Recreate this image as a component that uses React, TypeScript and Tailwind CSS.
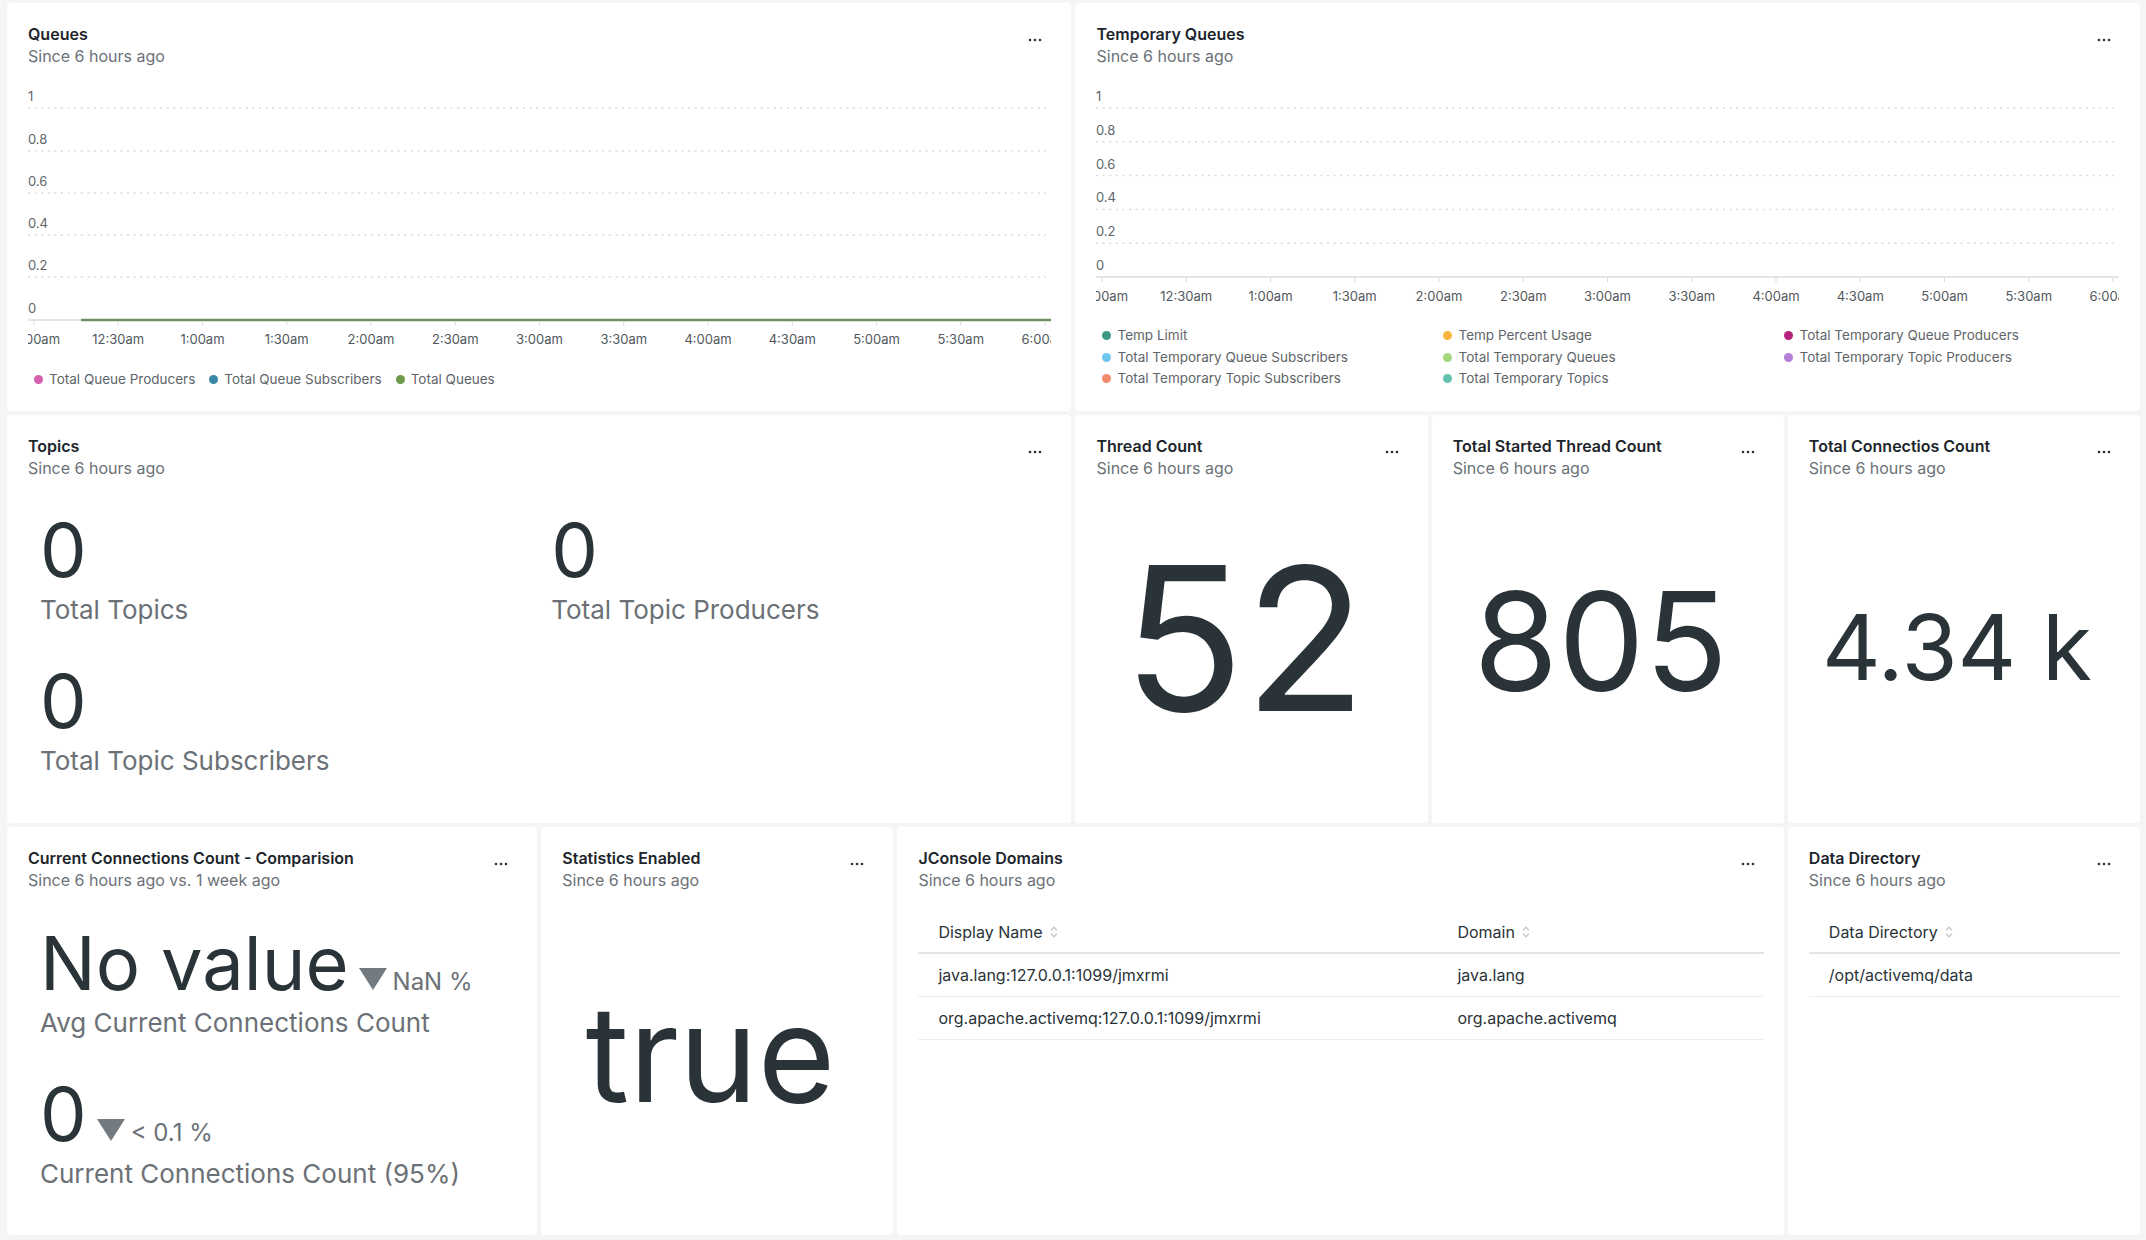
import React from "react";

const ticks = [
  "12:00am",
  "12:30am",
  "1:00am",
  "1:30am",
  "2:00am",
  "2:30am",
  "3:00am",
  "3:30am",
  "4:00am",
  "4:30am",
  "5:00am",
  "5:30am",
  "6:00am",
];

const yValues = ["1", "0.8", "0.6", "0.4", "0.2"];

const queueSeries = [
  { label: "Total Queue Producers", color: "#d65fad" },
  { label: "Total Queue Subscribers", color: "#3b87a6" },
  { label: "Total Queues", color: "#6c9a4a" },
];

const tempSeries = [
  { label: "Temp Limit", color: "#3a9985" },
  { label: "Temp Percent Usage", color: "#f6b73c" },
  { label: "Total Temporary Queue Producers", color: "#b4227e" },
  { label: "Total Temporary Queue Subscribers", color: "#6cc6ee" },
  { label: "Total Temporary Queues", color: "#a7d67c" },
  { label: "Total Temporary Topic Producers", color: "#b57ed8" },
  { label: "Total Temporary Topic Subscribers", color: "#f08b6b" },
  { label: "Total Temporary Topics", color: "#63c1b1" },
];

function MoreIcon() {
  return (
    <svg width="14" height="4" viewBox="0 0 14 4" className="mt-[15px] shrink-0" fill="#293338">
      <circle cx="2" cy="2" r="1.3" />
      <circle cx="7" cy="2" r="1.3" />
      <circle cx="12" cy="2" r="1.3" />
    </svg>
  );
}

function SortIcon() {
  return (
    <svg width="8" height="14" viewBox="0 0 8 14" fill="none" stroke="#c3c8cb" strokeWidth="1.3" className="ml-[7px]">
      <path d="M1.2 5.2 4 2.2l2.8 3" />
      <path d="M1.2 8.8 4 11.8l2.8-3" />
    </svg>
  );
}

function DownTriangle({ className = "" }: { className?: string }) {
  return (
    <svg width="28" height="22" viewBox="0 0 28 22" className={className}>
      <path d="M0 0h28L14 22z" fill="#737b80" />
    </svg>
  );
}

interface CardProps {
  title: string;
  subtitle?: string;
  className?: string;
  children?: React.ReactNode;
}

function Card({ title, subtitle = "Since 6 hours ago", className = "", children }: CardProps) {
  return (
    <section className={`flex min-w-0 flex-col rounded-[4px] bg-white ${className}`}>
      <header className="flex items-start justify-between pl-[21px] pr-[29px] pt-[20px]">
        <div className="min-w-0">
          <h2 className="text-[16px] font-semibold leading-[22px] text-[#1d252c]">{title}</h2>
          <p className="text-[16px] leading-[22px] text-[#6b7176]">{subtitle}</p>
        </div>
        <MoreIcon />
      </header>
      {children}
    </section>
  );
}

interface ChartProps {
  grid: number[];
  axis: number;
  labelY: number;
  height: number;
  lineFrom?: number;
}

// time series panel; labels at both ends are clipped by the plot edge, like the original
function TimeChart({ grid, axis, labelY, height, lineFrom }: ChartProps) {
  const W = 1023;
  const step = 84.25;
  return (
    <svg width={W} height={height} className="block">
      {grid.map((y, i) => (
        <g key={y}>
          <text x={0} y={y - 7} fontSize={13} fill="#60676c">
            {yValues[i]}
          </text>
          <line x1={0} x2={1018} y1={y} y2={y} stroke="#d8dbdd" strokeWidth={1.5} strokeDasharray="2 4.6" />
        </g>
      ))}
      <text x={0} y={axis - 7} fontSize={13} fill="#60676c">
        0
      </text>
      <line x1={0} x2={W} y1={axis} y2={axis} stroke="#e2e4e5" strokeWidth={2} />
      {lineFrom !== undefined && (
        <line x1={lineFrom} x2={W} y1={axis} y2={axis} stroke="#6b9160" strokeWidth={2.5} />
      )}
      {ticks.map((t, i) => {
        const x = 6 + i * step;
        return (
          <g key={t}>
            <line x1={x} x2={x} y1={axis + 1} y2={axis + 5} stroke="#d5d8da" strokeWidth={1} />
            <text x={x} y={labelY} textAnchor="middle" fontSize={13} fill="#51585d">
              {t}
            </text>
          </g>
        );
      })}
    </svg>
  );
}

function LegendItem({ label, color }: { label: string; color: string }) {
  return (
    <span className="flex items-center gap-[6px] whitespace-nowrap">
      <span className="h-[9px] w-[9px] shrink-0 rounded-full" style={{ backgroundColor: color }} />
      {label}
    </span>
  );
}

function Metric({ value, label, delta }: { value: string; label: string; delta?: string }) {
  return (
    <div className="flex flex-col px-[12px] pb-[37px]">
      <div className="flex items-baseline">
        <span className="text-[74px] leading-[76px] text-[#293338]">{value}</span>
        {delta && (
          <>
            <DownTriangle className="mb-[2px] ml-[10px]" />
            <span className="ml-[6px] text-[24px] leading-none text-[#6b7176]">{delta}</span>
          </>
        )}
      </div>
      <div className="mt-[6px] whitespace-nowrap text-[26px] leading-[32px] text-[#6b7176]">{label}</div>
    </div>
  );
}

function BigNumber({ value, size, pb }: { value: string; size: string; pb: string }) {
  return (
    <div className={`flex flex-1 items-center justify-center pl-[14px] pr-[28px] ${pb}`}>
      <span className={`${size} leading-none whitespace-nowrap text-[#293338]`}>{value}</span>
    </div>
  );
}

function DataTable({ columns, rows, firstWidth }: { columns: string[]; rows: string[][]; firstWidth?: string }) {
  return (
    <div className="pl-[21px] pr-[20px] pt-[20px] text-[16px] text-[#293338]">
      <div className="flex h-[43px] items-center border-b-2 border-[#e3e5e6]">
        {columns.map((c, i) => (
          <div key={c} className={`flex items-center pl-[20px] ${i === 0 && firstWidth ? firstWidth : "flex-1"}`}>
            {c}
            <SortIcon />
          </div>
        ))}
      </div>
      {rows.map((r) => (
        <div key={r[0]} className="flex h-[43px] items-center border-b border-[#eceeef]">
          {r.map((cell, i) => (
            <div key={cell} className={`pl-[20px] whitespace-nowrap ${i === 0 && firstWidth ? firstWidth : "flex-1"}`}>
              {cell}
            </div>
          ))}
        </div>
      ))}
    </div>
  );
}

export default function App() {
  return (
    <div className="min-h-screen w-full bg-[#f4f5f5] pb-[5px] pl-[7px] pr-[6px] pt-[3px] font-['Inter',sans-serif] antialiased">
      <div className="grid grid-cols-12 auto-rows-[408px] gap-[4px]">
        <Card title="Queues" className="col-span-6">
          <div className="pl-[21px]">
            <TimeChart grid={[41, 84, 126, 168, 210]} axis={253} labelY={276.5} height={290} lineFrom={53} />
            <div className="mt-[13px] flex gap-[14px] pl-[6px] text-[13.5px] leading-[18px] text-[#5e656a]">
              {queueSeries.map((s) => (
                <LegendItem key={s.label} {...s} />
              ))}
            </div>
          </div>
        </Card>

        <Card title="Temporary Queues" className="col-span-6">
          <div className="pl-[21px]">
            <TimeChart grid={[41, 74.8, 108.6, 142.4, 176.2]} axis={210} labelY={233.5} height={245} />
            <div className="mt-[13px] grid grid-cols-[341px_341px_341px] pl-[6px] text-[13.5px] leading-[21.5px] text-[#5e656a]">
              {tempSeries.map((s) => (
                <LegendItem key={s.label} {...s} />
              ))}
            </div>
          </div>
        </Card>

        <Card title="Topics" className="col-span-6">
          <div className="grid grid-cols-2 px-[21px] pt-[33px]">
            <Metric value="0" label="Total Topics" />
            <Metric value="0" label="Total Topic Producers" />
            <Metric value="0" label="Total Topic Subscribers" />
          </div>
        </Card>

        <Card title="Thread Count" className="col-span-2">
          <BigNumber value="52" size="text-[200px]" pb="pb-[26px]" />
        </Card>

        <Card title="Total Started Thread Count" className="col-span-2">
          <BigNumber value="805" size="text-[137px]" pb="pb-[20px]" />
        </Card>

        <Card title="Total Connectios Count" className="col-span-2">
          <BigNumber value="4.34 k" size="text-[91px]" pb="pb-[8px]" />
        </Card>

        <Card title="Current Connections Count - Comparision" subtitle="Since 6 hours ago vs. 1 week ago" className="col-span-3">
          <div className="px-[21px] pt-[34px]">
            <Metric value="No value" delta="NaN %" label="Avg Current Connections Count" />
            <Metric value="0" delta="< 0.1 %" label="Current Connections Count (95%)" />
          </div>
        </Card>

        <Card title="Statistics Enabled" className="col-span-2">
          <BigNumber value="true" size="text-[133px]" pb="pb-[19px]" />
        </Card>

        <Card title="JConsole Domains" className="col-span-5">
          <DataTable
            columns={["Display Name", "Domain"]}
            firstWidth="w-[519px] shrink-0"
            rows={[
              ["java.lang:127.0.0.1:1099/jmxrmi", "java.lang"],
              ["org.apache.activemq:127.0.0.1:1099/jmxrmi", "org.apache.activemq"],
            ]}
          />
        </Card>

        <Card title="Data Directory" className="col-span-2">
          <DataTable columns={["Data Directory"]} rows={[["/opt/activemq/data"]]} />
        </Card>
      </div>
    </div>
  );
}
